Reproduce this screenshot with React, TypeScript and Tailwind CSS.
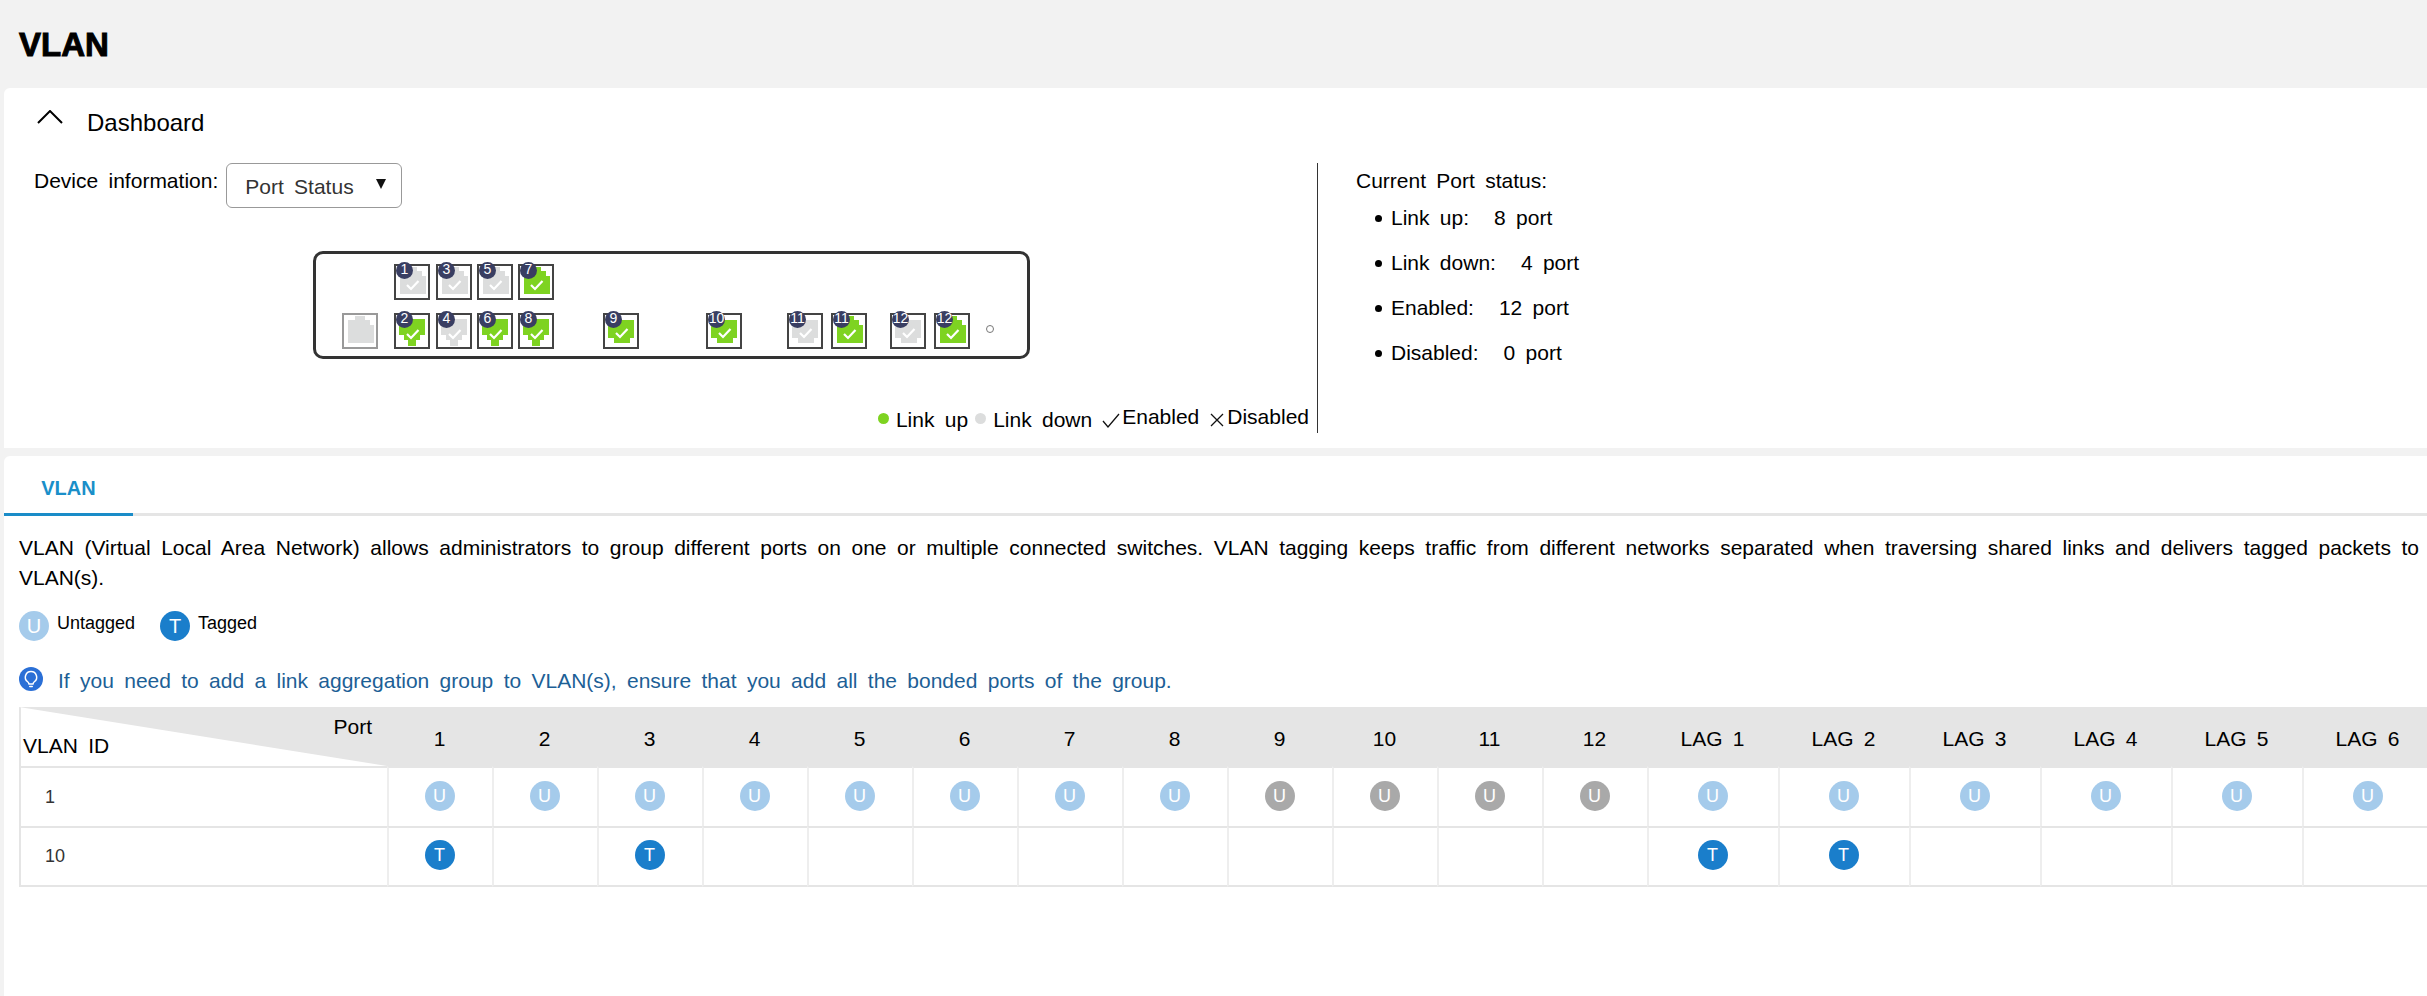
import React from 'react';

type Shape = 'up' | 'deep' | 'shallow';

interface PortData {
  label?: string;
  on: boolean;
  shape: Shape;
  margin: string;
  uplink?: boolean;
}

const shapes: Record<Shape, string> = {
  up: '6,30 32,30 32,12 28,12 28,7 23,7 23,3 13,3 13,7 6,7',
  deep: '5,6 31,6 31,22 26,22 26,27 22,27 22,33 14,33 14,27 10,27 10,22 5,22',
  shallow: '5,7 31,7 31,25 27,25 27,30 11,30 11,25 5,25',
};

const topRow: PortData[] = [
  { label: '1', on: false, shape: 'up', margin: 'ml-[78px]' },
  { label: '3', on: false, shape: 'up', margin: 'ml-[6px]' },
  { label: '5', on: false, shape: 'up', margin: 'ml-[5px]' },
  { label: '7', on: true, shape: 'up', margin: 'ml-[5px]' },
];

const bottomRow: PortData[] = [
  { on: false, shape: 'up', margin: 'ml-[26px]', uplink: true },
  { label: '2', on: true, shape: 'deep', margin: 'ml-[16px]' },
  { label: '4', on: false, shape: 'deep', margin: 'ml-[6px]' },
  { label: '6', on: true, shape: 'deep', margin: 'ml-[5px]' },
  { label: '8', on: true, shape: 'deep', margin: 'ml-[5px]' },
  { label: '9', on: true, shape: 'shallow', margin: 'ml-[49px]' },
  { label: '10', on: true, shape: 'shallow', margin: 'ml-[67px]' },
  { label: '11', on: false, shape: 'shallow', margin: 'ml-[45px]' },
  { label: '11', on: true, shape: 'up', margin: 'ml-[8px]' },
  { label: '12', on: false, shape: 'shallow', margin: 'ml-[23px]' },
  { label: '12', on: true, shape: 'up', margin: 'ml-[8px]' },
];

const columns = ['1', '2', '3', '4', '5', '6', '7', '8', '9', '10', '11', '12', 'LAG 1', 'LAG 2', 'LAG 3', 'LAG 4', 'LAG 5', 'LAG 6'];
const taggedColumns = ['1', '3', 'LAG 1', 'LAG 2'];
const downColumns = ['9', '10', '11', '12'];

const counts = [
  { name: 'Link up:', value: '8 port' },
  { name: 'Link down:', value: '4 port' },
  { name: 'Enabled:', value: '12 port' },
  { name: 'Disabled:', value: '0 port' },
];

function Port({ port }: { port: PortData }) {
  const checkY = port.shape === 'shallow' ? 20 : 21;
  return (
    <div className={`relative w-[36px] h-[36px] shrink-0 border-2 ${port.uplink ? 'border-[#999]' : 'border-[#444]'} ${port.margin}`}>
      <svg width="36" height="36" viewBox="0 0 36 36" className="absolute -left-[2px] -top-[2px]">
        <polygon points={shapes[port.shape]} fill={port.on ? '#7ed321' : '#dcdddd'} />
        {!port.uplink && (
          <polyline
            points={`13,${checkY} 17,${checkY + 4} 24.5,${checkY - 4}`}
            fill="none"
            stroke="#fff"
            strokeWidth="2.2"
          />
        )}
      </svg>
      {port.label && (
        <span className="absolute left-0 -top-[4px] w-[17px] h-[17px] rounded-full bg-[#393e62] text-white text-[14px] leading-[15px] flex justify-center [word-spacing:0px]">
          {port.label}
        </span>
      )}
    </div>
  );
}

function Badge({ kind, large }: { kind: 'U' | 'T' | 'D'; large?: boolean }) {
  const bg = kind === 'T' ? 'bg-[#1a7ecb]' : kind === 'U' ? 'bg-[#a5cbeb]' : 'bg-[#a9a9a9]';
  return (
    <span className={`w-[30px] h-[30px] rounded-full ${bg} text-white ${large ? 'text-[20px]' : 'text-[18px]'} leading-[30px] flex items-center justify-center shrink-0`}>
      {kind === 'T' ? 'T' : 'U'}
    </span>
  );
}

export default function App() {
  return (
    <div className="w-[2427px] h-[996px] overflow-hidden bg-[#f2f2f2] text-black font-['Liberation_Sans',Arial,sans-serif] text-[21px] [word-spacing:4.5px]">
      <h1 className="h-[88px] pl-[19px] pt-[26px] text-[33px] leading-[38px] font-black [-webkit-text-stroke:1px_black]">VLAN</h1>

      {/* Dashboard */}
      <section className="ml-[4px] h-[360px] bg-white rounded-tl-[6px] flex flex-col">
        <div className="h-[70px] flex items-center pl-[33px]">
          <svg width="26" height="14" viewBox="0 0 26 14" className="-mt-[12px]">
            <polyline points="1,13 13,1 25,13" fill="none" stroke="#000" strokeWidth="2" />
          </svg>
          <span className="ml-[24px] text-[24px]">Dashboard</span>
        </div>
        <div className="flex h-[270px] mt-[5px]">
          <div className="w-[1313px] flex flex-col pl-[30px] pr-[8px]">
            <div className="flex items-start h-[45px]">
              <span className="mt-[6px] leading-[24px]">Device information:</span>
              <div className="ml-[8px] w-[176px] h-[45px] border border-[#999] rounded-[6px] flex items-center pl-[18px] pr-[14px] text-[#333] justify-between">
                <span className="mt-[2px]">Port Status</span>
                <svg width="12" height="10" viewBox="0 0 12 10" className="-mt-[4px]">
                  <polygon points="1,0 11,0 6,10" fill="#111" />
                </svg>
              </div>
            </div>
            <div className="mt-[43px] ml-[279px] w-[717px] h-[108px] border-[3px] border-[#333] rounded-[10px] shrink-0 flex flex-col pt-[10px]">
              <div className="flex">
                {topRow.map((p) => (
                  <Port key={p.label} port={p} />
                ))}
              </div>
              <div className="flex mt-[13px] items-center">
                {bottomRow.map((p, i) => (
                  <Port key={i} port={p} />
                ))}
                <span className="ml-[16px] -mt-[4px] w-[8px] h-[8px] rounded-full border border-[#777]" />
              </div>
            </div>
            <div className="mt-auto mb-[2px] flex justify-end items-center h-[26px] leading-[24px]">
              <span className="w-[11px] h-[11px] rounded-full bg-[#7ed321]" />
              <span className="ml-[7px] mt-[3px]">Link up</span>
              <span className="ml-[7px] w-[11px] h-[11px] rounded-full bg-[#dcdddd]" />
              <span className="ml-[7px] mt-[3px]">Link down</span>
              <svg width="18" height="15" viewBox="0 0 18 15" className="ml-[10px] mt-[4px]">
                <polyline points="1,8 6,14 17,1" fill="none" stroke="#111" strokeWidth="1.3" />
              </svg>
              <span className="ml-[2px] -mt-[2px]">Enabled</span>
              <svg width="14" height="14" viewBox="0 0 14 14" className="ml-[11px] mt-[4px]">
                <path d="M1 1 L13 13 M13 1 L1 13" fill="none" stroke="#111" strokeWidth="1.3" />
              </svg>
              <span className="ml-[3px] -mt-[2px]">Disabled</span>
            </div>
          </div>
          <div className="w-px bg-[#333]" />
          <div className="pl-[38px] pt-[6px]">
            <p className="leading-[24px]">Current Port status:</p>
            <ul className="mt-[13px] flex flex-col gap-[21px]">
              {counts.map((c) => (
                <li key={c.name} className="flex items-center leading-[24px] pl-[19px]">
                  <span className="w-[7px] h-[7px] rounded-full bg-black mr-[9px]" />
                  <span>{c.name}</span>
                  <span className="ml-[25px]">{c.value}</span>
                </li>
              ))}
            </ul>
          </div>
        </div>
      </section>

      {/* VLAN tab */}
      <section className="ml-[4px] mt-[8px] h-[540px] bg-white rounded-tl-[6px] overflow-hidden">
        <div className="h-[60px] border-b-[3px] border-[#e5e5e5] flex">
          <div className="w-[129px] h-[60px] border-b-[3px] border-[#1a8cc8] flex items-center justify-center text-[20px] text-[#1a8fc9] font-bold pt-[6px]">
            VLAN
          </div>
        </div>

        <div className="pl-[15px] pr-[8px]">
          <p className="mt-[17px] leading-[30px] text-justify">
            VLAN (Virtual Local Area Network) allows administrators to group different ports on one or multiple connected switches. VLAN tagging keeps traffic from different networks separated when traversing shared links and delivers tagged packets to VLAN(s).
          </p>

          <div className="mt-[18px] flex items-start text-[18px] leading-[24px] [word-spacing:0px]">
            <Badge kind="U" large />
            <span className="ml-[8px]">Untagged</span>
            <span className="ml-[25px]">
              <Badge kind="T" large />
            </span>
            <span className="ml-[8px]">Tagged</span>
          </div>

          <div className="mt-[26px] flex items-center text-[#1d5f96] h-[24px]">
            <span className="w-[24px] h-[24px] rounded-full bg-[#2a6fd6] flex items-center justify-center">
              <svg width="20" height="20" viewBox="0 0 24 24" fill="none" stroke="#fff" strokeWidth="1.8" strokeLinecap="round" strokeLinejoin="round">
                <path d="M12 3a6.8 6.8 0 0 0-4 12.3c.9.7 1.4 1.6 1.6 2.7h4.8c.2-1.1.7-2 1.6-2.7A6.8 6.8 0 0 0 12 3z" />
                <path d="M10.5 21h3" />
              </svg>
            </span>
            <span className="ml-[15px] mt-[3px]">If you need to add a link aggregation group to VLAN(s), ensure that you add all the bonded ports of the group.</span>
          </div>

          <div className="mt-[16px] grid grid-cols-[368px_repeat(12,105px)_repeat(6,131px)] w-[2414px]">
            {/* header */}
            <div className="relative h-[59px] bg-[#e5e5e5]">
              <div className="absolute inset-0 bg-white border-l-2 border-[#e5e5e5] [clip-path:polygon(0_0,100%_100%,0_100%)]" />
              <span className="absolute left-[4px] top-[27px] leading-[24px]">VLAN ID</span>
              <span className="absolute right-[15px] top-[8px] leading-[24px]">Port</span>
            </div>
            {columns.map((c) => (
              <div key={c} className="h-[59px] bg-[#e5e5e5] flex items-center justify-center pt-[5px]">
                {c}
              </div>
            ))}

            {/* VLAN 1 */}
            <div className="h-[60px] border-l-2 border-t-2 border-[#e5e5e5] flex items-center pl-[24px] text-[18px] text-[#333]">1</div>
            {columns.map((c) => (
              <div key={c} className="h-[60px] border-l-2 border-t-2 border-l-[#eee] border-t-[#e5e5e5] flex items-center justify-center pb-[3px] pr-[2px]">
                <Badge kind={downColumns.includes(c) ? 'D' : 'U'} />
              </div>
            ))}

            {/* VLAN 10 */}
            <div className="h-[61px] border-l-2 border-t-2 border-b-2 border-[#e5e5e5] flex items-center pl-[24px] text-[18px] text-[#333]">10</div>
            {columns.map((c) => (
              <div key={c} className="h-[61px] border-l-2 border-t-2 border-b-2 border-l-[#eee] border-t-[#e5e5e5] border-b-[#e5e5e5] flex items-center justify-center pb-[3px] pr-[2px]">
                {taggedColumns.includes(c) && <Badge kind="T" />}
              </div>
            ))}
          </div>
        </div>
      </section>
    </div>
  );
}
